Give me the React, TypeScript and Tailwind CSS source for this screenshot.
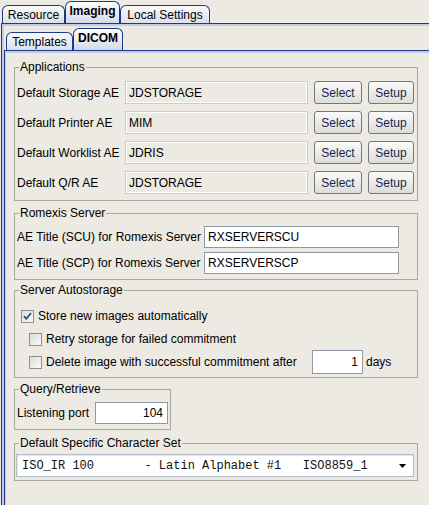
import React from 'react';

const NAVY = 'border-[#1c3a87]';

const Tab: React.FC<{ label: string; selected?: boolean; w: string }> = ({ label, selected, w }) => (
  <div
    className={`${w} ${NAVY} border border-b-0 rounded-t-[6px] flex items-center justify-center leading-none ${
      selected
        ? 'h-[22px] font-bold bg-gradient-to-b from-[#ffffff] to-[#d3d9ea]'
        : 'h-[18px] bg-gradient-to-b from-[#f9fafc] to-[#dce0ec]'
    }`}
  >
    <span className={selected ? 'pb-[3px]' : ''}>{label}</span>
  </div>
);

const Group: React.FC<{ title: string; className?: string; children: React.ReactNode }> = ({ title, className, children }) => (
  <fieldset className={`border border-[#a9a8a0] ml-[8px] ${className ?? ''}`}>
    <legend className="ml-[4px] px-px leading-[14px] text-black">{title}</legend>
    {children}
  </fieldset>
);

const Field: React.FC<{ value: string; w: string; h?: string; editable?: boolean; right?: boolean }> = ({ value, w, h = 'h-[23px]', editable, right }) => (
  <div
    className={`${w} ${h} shrink-0 flex items-center border ${
      editable
        ? 'bg-white border-[#8f99a6] px-[3px]'
        : 'bg-[#eceae2] border-[#c6ccd7] shadow-[inset_1px_1px_0_#ffffff,inset_-1px_-1px_0_#ffffff] px-[3px]'
    } ${right ? 'justify-end pr-[4px]' : ''}`}
  >
    {value}
  </div>
);

const Btn: React.FC<{ label: string; w: string }> = ({ label, w }) => (
  <button className={`${w} h-[23px] shrink-0 rounded-[3px] border border-[#74767a] bg-gradient-to-b from-[#fbfbfb] to-[#dcdcd8] text-[#1a2550] flex items-center justify-center`}>
    {label}
  </button>
);

const Check: React.FC<{ checked?: boolean }> = ({ checked }) => (
  <svg width="13" height="13" viewBox="0 0 13 13" className="shrink-0">
    <defs>
      <linearGradient id={checked ? 'cg1' : 'cg0'} x1="0" y1="0" x2="1" y2="1">
        <stop offset="0" stopColor="#dcdcd6" />
        <stop offset="1" stopColor="#fbfbf9" />
      </linearGradient>
    </defs>
    <rect x="0.5" y="0.5" width="12" height="12" fill={`url(#${checked ? 'cg1' : 'cg0'})`} stroke="#8a8f99" />
    {checked && <path d="M3 6.2 L5.3 8.8 L10 3" fill="none" stroke="#2a4a9e" strokeWidth="1.8" />}
  </svg>
);

const apps = [
  { label: 'Default Storage AE', value: 'JDSTORAGE' },
  { label: 'Default Printer AE', value: 'MIM' },
  { label: 'Default Worklist AE', value: 'JDRIS' },
  { label: 'Default Q/R AE', value: 'JDSTORAGE' },
];

export default function App() {
  return (
    <div
      className="w-[429px] h-[505px] overflow-hidden bg-[#eceae2] text-[12px] text-black flex flex-col"
      style={{ fontFamily: '"Liberation Sans", Arial, sans-serif' }}
    >
      {/* outer tabs */}
      <div className="h-[23px] shrink-0 flex items-end pl-[2px]">
        <Tab label="Resource" w="w-[63px]" />
        <Tab label="Imaging" w="w-[55px]" selected />
        <Tab label="Local Settings" w="w-[90px]" />
      </div>

      <div className={`flex-1 ml-px border-l border-t ${NAVY} flex flex-col`}>
        <div className="flex-1 border-l-2 border-t-2 border-[#c3cce3] flex flex-col">
          {/* inner tabs */}
          <div className="h-[24px] shrink-0 flex items-end pl-[2px]">
            <Tab label="Templates" w="w-[67px]" />
            <Tab label="DICOM" w="w-[50px]" selected />
          </div>

          <div className={`flex-1 border-l border-t ${NAVY}`}>
            <div className="h-full border-l border-t-2 border-[#c3cce3] flex flex-col pt-[7px]">
              <Group title="Applications" className="w-[404px]">
                <div className="pl-[2px] pt-[7px] pb-[6px] flex flex-col gap-[7px]">
                  {apps.map(a => (
                    <div key={a.label} className="flex items-center h-[23px]">
                      <span className="w-[108px] shrink-0 whitespace-nowrap">{a.label}</span>
                      <Field value={a.value} w="w-[183px]" />
                      <div className="ml-[6px]"><Btn label="Select" w="w-[48px]" /></div>
                      <div className="ml-[6px]"><Btn label="Setup" w="w-[46px]" /></div>
                    </div>
                  ))}
                </div>
              </Group>

              <Group title="Romexis Server" className="w-[404px] mt-[5px]">
                <div className="pl-[2px] pt-[6px] pb-[5px] flex flex-col gap-[4px]">
                  <div className="flex items-center">
                    <span className="w-[187px] shrink-0 whitespace-nowrap">AE Title (SCU) for Romexis Server</span>
                    <Field value="RXSERVERSCU" w="w-[195px]" h="h-[22px]" editable />
                  </div>
                  <div className="flex items-center">
                    <span className="w-[187px] shrink-0 whitespace-nowrap">AE Title (SCP) for Romexis Server</span>
                    <Field value="RXSERVERSCP" w="w-[195px]" h="h-[22px]" editable />
                  </div>
                </div>
              </Group>

              <Group title="Server Autostorage" className="w-[404px] mt-[3px]">
                <div className="pt-[9px] pb-[3px] flex flex-col">
                  <div className="h-[20px] flex items-center gap-[4px] pl-[6px]">
                    <Check checked />
                    <span>Store new images automatically</span>
                  </div>
                  <div className="h-[20px] mt-[3px] flex items-center gap-[4px] pl-[14px]">
                    <Check />
                    <span>Retry storage for failed commitment</span>
                  </div>
                  <div className="h-[24px] mt-px flex items-center pl-[14px]">
                    <Check />
                    <span className="ml-[4px] w-[266px] shrink-0 whitespace-nowrap">Delete image with successful commitment after</span>
                    <Field value="1" w="w-[51px]" h="h-[24px]" editable right />
                    <span className="ml-[3px]">days</span>
                  </div>
                </div>
              </Group>

              <Group title="Query/Retrieve" className="w-[157px] mt-[4px]">
                <div className="pl-[2px] pt-[6px] pb-[5px] flex items-center">
                  <span className="w-[78px] shrink-0 whitespace-nowrap">Listening port</span>
                  <Field value="104" w="w-[73px]" h="h-[22px]" editable right />
                </div>
              </Group>

              <Group title="Default Specific Character Set" className="w-[404px] mt-[6px]">
                <div className="pl-px pr-[3px] pt-[4px] pb-[3px]">
                  <div className="h-[23px] w-[398px] bg-white border border-[#b4bccb] shadow-[inset_1px_1px_0_#e4e8f0] flex items-center pl-[5px] pr-[7px]">
                    <span
                      className="flex-1 whitespace-pre text-[12px] text-[#111]"
                      style={{ fontFamily: '"Liberation Mono", "Courier New", monospace' }}
                    >
                      {'ISO_IR 100       - Latin Alphabet #1   ISO8859_1'}
                    </span>
                    <svg width="7" height="4" viewBox="0 0 7 4">
                      <path d="M0 0 H7 L3.5 4 Z" fill="#000" />
                    </svg>
                  </div>
                </div>
              </Group>
            </div>
          </div>
        </div>
      </div>
    </div>
  );
}
